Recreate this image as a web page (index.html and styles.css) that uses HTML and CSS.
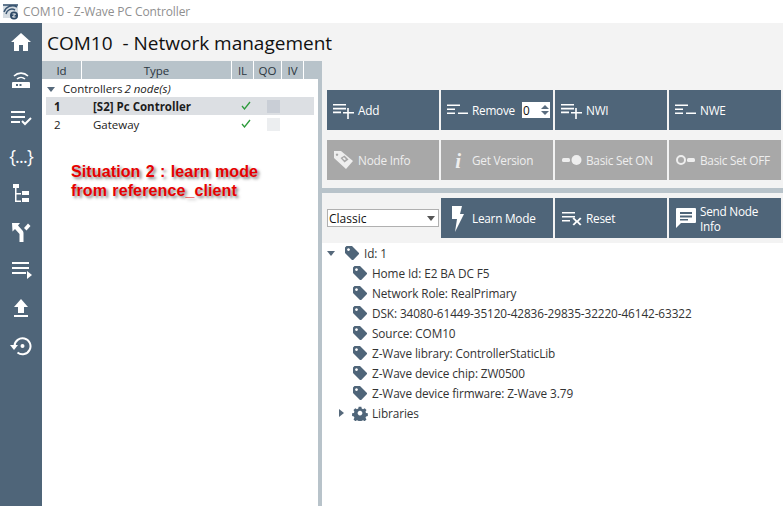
FILE: index.html
```html
<!DOCTYPE html>
<html lang="en">
<head>
<meta charset="utf-8">
<title>COM10 - Z-Wave PC Controller</title>
<link rel="stylesheet" href="styles.css">
</head>
<body>
<svg class="defs" width="0" height="0" aria-hidden="true">
  <defs>
    <symbol id="tag" viewBox="0 0 16 16"><path d="M1 2.500 2.500 1H8l7 7v1l-5.800 6H8L1 8z M4.500 3.200a1.400 1.400 0 1 0 .01 0z" fill-rule="evenodd" fill="currentColor"/></symbol>
    <symbol id="add" viewBox="0 0 22 18"><path d="M0 2h13v1.600H0zM0 5.800h13v1.600H0zM0 9.600h8v1.600H0zM10 10h4.200V6h1.600v4H21v1.600h-5.200V17h-1.600v-5.400H10z" fill="currentColor"/></symbol>
    <symbol id="rem" viewBox="0 0 22 18"><path d="M0 2.500h13v1.600H0zM0 6.500h8v1.600H0zM0 10.500h8v1.600H0zM11 10.500h10v1.600H11z" fill="currentColor"/></symbol>
  </defs>
</svg>
<header class="titlebar">
  <svg class="appicon" width="17" height="17" viewBox="0 0 17 17"><rect x="1" y="1" width="15" height="14" fill="#d5dce2"/><path d="M2 9a9 9 0 0 1 13-5M4 11a6 6 0 0 1 9-4M1 2h15" fill="none" stroke="#3b5672" stroke-width="1.500"/><circle cx="12" cy="12.500" r="4" fill="#2f4a66"/><path d="M10.500 11h3l-3 3h3" stroke="#fff" fill="none"/></svg>
  <span class="apptitle">COM10 - Z-Wave PC Controller</span>
</header>
<div class="app">
  <nav class="sidebar">
    <svg class="nav" width="20" height="18" viewBox="0 0 20 18"><path d="M10 0 20 9h-3v9h-5v-6H8v6H3V9H0z" fill="#fff"/></svg>
    <svg class="nav" width="20" height="18" viewBox="0 0 20 18"><path d="M3 5a10 10 0 0 1 14 0M6 8a6 6 0 0 1 8 0" fill="none" stroke="#fff" stroke-width="1.600"/><path fill-rule="evenodd" d="M2 11h16a1 1 0 0 1 1 1v5H1v-5a1 1 0 0 1 1-1zM5 13h2v2H5zM8.500 13h2v2h-2z" fill="#fff"/></svg>
    <svg class="nav" width="22" height="18" viewBox="0 0 22 18"><path d="M1 2h14v2H1zM1 7h14v2H1zM1 12h9v2H1z" fill="#fff"/><path d="m12 12 3 3 6-6" fill="none" stroke="#fff" stroke-width="2"/></svg>
    <span class="nav braces">{...}</span>
    <svg class="nav" width="18" height="20" viewBox="0 0 18 20"><path d="M1 0h6v4H1zM3 4h1.500v14H3zM3 9h6v1.500H3zM3 16.500h6V18H3zM10 7h7v4h-7zM10 14h7v4h-7z" fill="#fff"/></svg>
    <svg class="nav" width="20" height="20" viewBox="0 0 20 20"><path d="M1 1h8L7 3.500l4 4.500c1 1 1.500 2 1.500 3.500V20h-4v-8L4 7 1.500 9.500z" fill="#fff"/><path d="m13 6 4-4.500L19.500 4l-4 4.500z" fill="#fff"/></svg>
    <svg class="nav" width="21" height="18" viewBox="0 0 21 18"><path d="M1 1h17v2H1zM1 6h17v2H1zM1 11h14v2H1zM16 10l5 4-5 4z" fill="#fff"/></svg>
    <svg class="nav" width="16" height="20" viewBox="0 0 16 20"><path d="M8 1 15 9h-4v6H5V9H1zM1 17h14v2H1z" fill="#fff"/></svg>
    <svg class="nav" width="22" height="20" viewBox="0 0 22 20"><path d="M4.500 10a8 8 0 1 1 3 6.500" fill="none" stroke="#fff" stroke-width="2"/><path d="M0 9h8l-4 5z" fill="#fff"/><circle cx="12.500" cy="10" r="2" fill="#fff"/></svg>
  </nav>
  <main class="main">
    <h1 class="pagetitle">COM10&nbsp; - Network management</h1>
    <div class="panes">
      <section class="nodes">
        <div class="thead">
          <span class="th th-id">Id</span>
          <span class="th th-type">Type</span>
          <span class="th th-il">IL</span>
          <span class="th th-qo">QO</span>
          <span class="th th-iv">IV</span>
          <span class="th th-fill"></span>
        </div>
        <div class="group"><i class="tri-down"></i>Controllers <em>2 node(s)</em></div>
        <div class="row selected">
          <span class="c-id">1</span><span class="c-type">[S2] Pc Controller</span>
          <span class="c-il"><svg width="10" height="9" viewBox="0 0 10 9"><path d="M1 5l2.500 3L9 1" fill="none" stroke="#2e9b3c" stroke-width="1.300"/></svg></span><span class="c-qo"><i class="sq"></i></span>
        </div>
        <div class="row">
          <span class="c-id">2</span><span class="c-type">Gateway</span>
          <span class="c-il"><svg width="10" height="9" viewBox="0 0 10 9"><path d="M1 5l2.500 3L9 1" fill="none" stroke="#2e9b3c" stroke-width="1.300"/></svg></span><span class="c-qo"><i class="sq"></i></span>
        </div>
        <p class="note">Situation 2 : learn mode<br>from reference_client</p>
      </section>
      <div class="vsplit"></div>
      <section class="right">
        <div class="upper">
          <div class="btns">
            <button class="btn"><svg class="ic" width="22" height="18"><use href="#add"/></svg>Add</button>
            <button class="btn"><svg class="ic" width="22" height="18"><use href="#rem"/></svg>Remove
              <span class="spin"><span>0</span><span class="arrows"><i class="up"></i><i class="down"></i></span></span></button>
            <button class="btn"><svg class="ic" width="22" height="18"><use href="#add"/></svg>NWI</button>
            <button class="btn"><svg class="ic" width="22" height="18"><use href="#rem"/></svg>NWE</button>
          </div>
          <div class="btns">
            <button class="btn off"><svg class="ic" width="22" height="20" viewBox="0 0 22 20"><path fill-rule="evenodd" d="M1 0h7l12 10-7 8L1 7zM4 2.500a1.200 1.200 0 1 0 .01 0zM7.500 7l4-2.500 4 4-4 3zM9.500 7.300l2 2 1.500-1-2-2z" fill="currentColor"/></svg>Node Info</button>
            <button class="btn off"><span class="ic info">i</span>Get Version</button>
            <button class="btn off"><svg class="ic" width="22" height="14" viewBox="0 0 22 14"><rect x="1" y="4" width="8" height="4" rx="1.500" fill="currentColor"/><circle cx="15.500" cy="6" r="5" fill="currentColor"/></svg>Basic Set ON</button>
            <button class="btn off"><svg class="ic" width="22" height="14" viewBox="0 0 22 14"><circle cx="6" cy="6" r="4" fill="none" stroke="currentColor" stroke-width="2"/><rect x="12" y="4" width="8" height="4" rx="1.500" fill="currentColor"/></svg>Basic Set OFF</button>
          </div>
        </div>
        <div class="hsplit"></div>
        <div class="btns lower">
          <div class="selectwrap"><span>Classic</span><i class="tri-down dark"></i></div>
          <button class="btn"><svg class="ic" width="22" height="26" viewBox="0 0 22 26"><path d="M5 0h10l-2 8h4L8 26l2-13H5z" fill="#fff"/></svg>Learn Mode</button>
          <button class="btn"><svg class="ic" width="22" height="18" viewBox="0 0 22 18"><path d="M1 2h13v1.600H1zM1 6h13v1.600H1zM1 10h8v1.600H1zM11.500 8.500l1.500-1 3 3 3-3 1.500 1-3 3 3 3-1.500 1-3-3-3 3-1.500-1 3-3z" fill="#fff"/></svg>Reset</button>
          <button class="btn"><svg class="ic" width="22" height="24" viewBox="0 0 22 24"><path fill-rule="evenodd" d="M2 1h18a1 1 0 0 1 1 1v13a1 1 0 0 1-1 1H6l-5 5V2a1 1 0 0 1 1-1zM5 5h12v2H5zM5 8.500h12v2H5zM5 12h8v1.500H5z" fill="#fff"/></svg><span class="wrap">Send Node Info</span></button>
        </div>
        <div class="tree">
          <div class="tn root"><i class="tri-down"></i><svg class="tag" width="16" height="16"><use href="#tag"/></svg>Id: 1</div>
          <div class="tn"><svg class="tag" width="16" height="16"><use href="#tag"/></svg>Home Id: E2 BA DC F5</div>
          <div class="tn"><svg class="tag" width="16" height="16"><use href="#tag"/></svg>Network Role: RealPrimary</div>
          <div class="tn"><svg class="tag" width="16" height="16"><use href="#tag"/></svg>DSK: 34080-61449-35120-42836-29835-32220-46142-63322</div>
          <div class="tn"><svg class="tag" width="16" height="16"><use href="#tag"/></svg>Source: COM10</div>
          <div class="tn"><svg class="tag" width="16" height="16"><use href="#tag"/></svg>Z-Wave library: ControllerStaticLib</div>
          <div class="tn"><svg class="tag" width="16" height="16"><use href="#tag"/></svg>Z-Wave device chip: ZW0500</div>
          <div class="tn"><svg class="tag" width="16" height="16"><use href="#tag"/></svg>Z-Wave device firmware: Z-Wave 3.79</div>
          <div class="tn libs"><i class="tri-right"></i><svg class="tag" width="16" height="16" viewBox="0 0 16 16"><path fill-rule="evenodd" d="M6.500 1h3l.4 2 1.500.7 1.800-1.100 2 2.100-1.100 1.800.6 1.500 2 .4v3l-2 .4-.6 1.500 1.100 1.800-2 2-1.800-1-1.500.6-.4 2h-3l-.4-2-1.500-.6-1.800 1-2-2 1-1.800-.6-1.500-2-.4v-3l2-.4.6-1.500-1-1.800 2-2.100 1.800 1.100 1.500-.7zM8 5.600a2.600 2.600 0 1 0 .01 0z" fill="currentColor" transform="translate(0.800 0.800) scale(.9)"/></svg>Libraries</div>
        </div>
      </section>
    </div>
  </main>
</div>
</body>
</html>
```
FILE: styles.css
```css
* { box-sizing: border-box; }
html, body { margin: 0; height: 100%; }
body {
  width: 783px; height: 506px; overflow: hidden;
  display: flex; flex-direction: column;
  font-family: "Open Sans", "Noto Sans", sans-serif;
  font-size: 12px; color: #1c1c1c; background: #f3f3f3;
}
.defs { position: absolute; }
.titlebar {
  height: 23px; flex: none; background: #fff;
  display: flex; align-items: center; padding-left: 2px; gap: 4px;
}
.apptitle { color: #8f8f8f; font-size: 12px; letter-spacing: -.1px; }
.app { flex: 1; display: flex; min-height: 0; }
.sidebar {
  width: 42px; flex: none; background: #4f6579;
  display: flex; flex-direction: column; align-items: center;
  padding-top: 9px;
}
.nav { height: 20px; margin-bottom: 18px; flex: none; }
.braces {
  color: #fff; font-size: 18px; line-height: 20px; white-space: nowrap;
  font-family: "Open Sans", sans-serif; letter-spacing: -.8px;
}
.main { flex: 1; display: flex; flex-direction: column; min-width: 0; }
.pagetitle {
  margin: 0; height: 38px; flex: none; padding: 7px 0 0 5px;
  font-size: 19px; font-weight: 400; line-height: 26px; color: #111;
}
.panes { flex: 1; display: flex; min-height: 0; }
.nodes { width: 276px; flex: none; background: #fff; font-size: 11.500px; }
.thead { display: flex; height: 18px; background: #b8c3ca; gap: 1px; }
.th { background: #b8c3ca; text-align: center; line-height: 20px; font-size: 11.500px; color: #2a3540; box-shadow: 1px 0 0 #fff; }
.th-id { width: 39px; }
.th-type { width: 149px; }
.th-il { width: 21px; }
.th-qo { width: 27px; }
.th-iv { width: 21px; }
.th-fill { flex: 1; box-shadow: none; }
.group { height: 18px; line-height: 18px; padding: 2px 0 0 5px; display: flex; align-items: center; white-space: pre; }
.group em { margin-left: -1px; }
.tri-down { display: inline-block; width: 0; height: 0; border: 4px solid transparent; border-top: 5px solid #56697b; border-bottom: 0; margin-right: 8px; }
.tri-down.dark { border-top-color: #555; margin: 0; }
.tri-right { display: inline-block; width: 0; height: 0; border: 4px solid transparent; border-left: 5px solid #56697b; border-right: 0; }
.row { height: 18px; margin: 0 4px; padding-top: 2px; display: flex; align-items: center; line-height: 16px; }
.row.selected { background: #dcdfe3; font-weight: 700; }
.c-id { width: 39px; padding-left: 8px; flex: none; }
.c-type { width: 149px; padding-left: 8px; flex: none; }
.c-il { width: 21px; display: flex; justify-content: center; padding-left: 2px; margin-top: -3px; flex: none; }
.c-qo { width: 27px; display: flex; justify-content: center; padding-left: 9px; margin-top: -2px; flex: none; }
.sq { width: 13px; height: 13px; background: #eceef0; display: block; }
.selected .sq { background: #c9ced6; }
.note {
  margin: 29px 0 0 29px; font: 700 16px/19px "Liberation Sans", Arial, sans-serif; color: #e60000;
  letter-spacing: .12px; word-spacing: .7px;
  text-shadow: 2px 2px 3px rgba(0,0,0,.5);
}
.vsplit { width: 4px; flex: none; background: #b8c3ca; }
.right { flex: 1; display: flex; flex-direction: column; min-width: 0; }
.upper { height: 127px; flex: none; padding: 29px 0 0 5px; display: flex; flex-direction: column; gap: 10px; }
.btns { display: grid; grid-template-columns: repeat(4, 112px); gap: 2px; height: 40px; flex: none; }
.btn {
  border: 0; padding: 1px 0 0 6px; margin: 0; background: #4f6579; color: #fff; height: 40px;
  display: flex; align-items: center; text-align: left; gap: 3px;
  font: 400 11.800px/15px "Open Sans", "Noto Sans", sans-serif; white-space: nowrap; letter-spacing: -.25px;
}
.btn.off { background: #a8a8a8; color: #eee; }
.ic { flex: none; }
.info { width: 22px; text-align: center; font: italic 700 21px/22px "Liberation Serif", serif; }
.wrap { white-space: normal; width: 70px; }
.spin { display: flex; align-items: center; justify-content: space-between; width: 28px; height: 16px; margin-top: -1px; background: #fff; color: #111; margin-left: 4px; padding: 0 1px; }
.arrows { display: flex; flex-direction: column; gap: 2px; }
.up { width: 0; height: 0; border: 4px solid transparent; border-bottom: 4px solid #5a6d7f; border-top: 0; }
.down { width: 0; height: 0; border: 4px solid transparent; border-top: 4px solid #5a6d7f; border-bottom: 0; }
.hsplit { height: 5px; flex: none; background: #b8c3ca; }
.lower { height: 50px; padding: 5px 0 5px 5px; }
.selectwrap {
  align-self: center; height: 18px; width: 112px; background: #fff; border: 1px solid #b0b0b0;
  display: flex; align-items: center; justify-content: space-between; padding: 0 3px 0 1px; color: #111;
}
.tree { flex: 1; background: #fff; }
.tn { height: 20px; display: flex; align-items: center; padding-left: 30px; gap: 4px; color: #333; font-size: 11.800px; white-space: nowrap; letter-spacing: -.1px; }
.tn .tag { color: #4f6579; flex: none; }
.tn.root { padding-left: 5px; }
.tn.root .tri-down { margin-right: 5px; }
.tn.libs { padding-left: 17px; }
.tn.libs .tri-right { margin-right: 4px; }
```
